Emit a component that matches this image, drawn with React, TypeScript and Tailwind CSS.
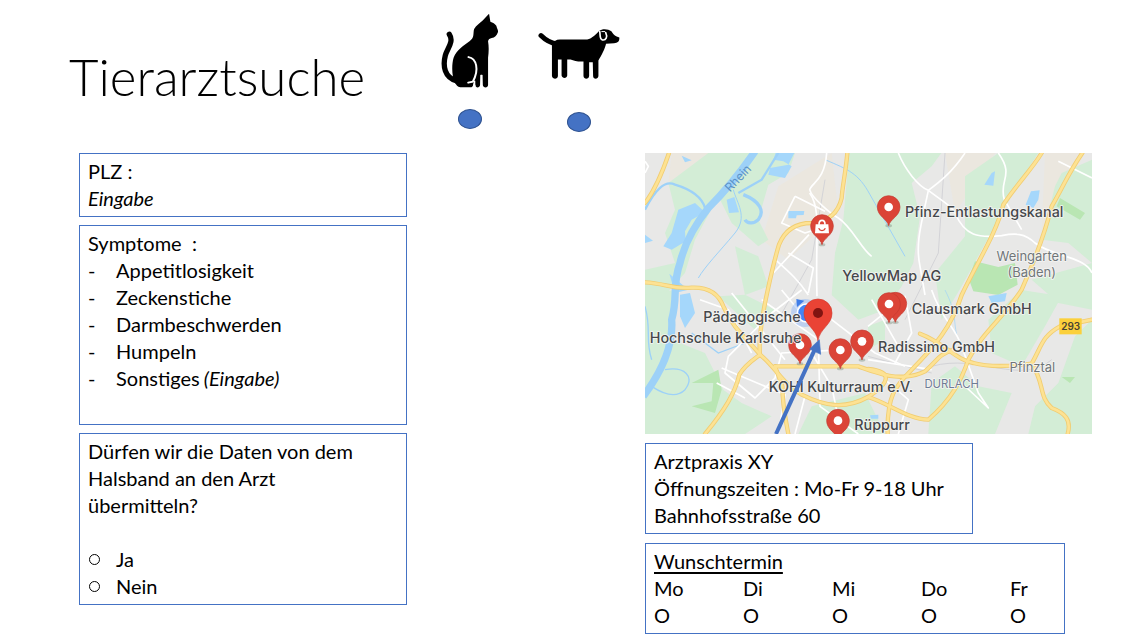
import React from "react";

const symptoms = ["Appetitlosigkeit", "Zeckenstiche", "Darmbeschwerden", "Humpeln"];
const days = ["Mo", "Di", "Mi", "Do", "Fr"];

const card = "min-w-0 border border-[#4472c4] px-2 py-1";
const dot =
  "h-5 w-6 appearance-none rounded-[50%] border border-[#2f528f] bg-[#4472c4] focus-visible:outline-2 focus-visible:outline-offset-2";

function Cat() {
  return (
    <svg viewBox="30 25 175 226" className="h-[75px] w-[58px]" aria-hidden="true">
      <path
        d="M175 27 L179 51 C186 54 193 57 197 63 C198 70 203 75 202 82 C198 93 192 99 183 100 C177 101 173 104 172 110 C175 128 174 144 172 160 L172 242 C172 252 157 252 156 242 L155 212 L149 212 L148 242 C147 252 133 252 134 242 L127 236 C128 244 125 249 118 249 L88 249 C80 248 76 241 72 236 C62 215 62 180 68 160 C77 136 98 123 117 109 C132 98 126 86 130 73 C136 61 147 56 155 48 Z"
        fill="#000"
      />
      <path d="M78 230 C40 220 35 184 43 153 C49 131 70 112 55 89" fill="none" stroke="#000" strokeWidth="16" strokeLinecap="round" />
      <path d="M113 158 C137 162 146 196 126 232 L112 235" fill="none" stroke="#fff" strokeWidth="6" strokeLinecap="round" />
      <path d="M131 229 V252 M152 211 V252" stroke="#fff" strokeWidth="5" />
    </svg>
  );
}

function Dog() {
  return (
    <svg viewBox="322 70 247 155" className="h-[52px] w-[82px]" aria-hidden="true">
      <path d="M331 92 C343 104 356 114 378 117" fill="none" stroke="#000" strokeWidth="15" strokeLinecap="round" />
      <path
        d="M364 122 C368 110 376 104 388 104 L470 104 C486 100 497 87 506 78 C516 70 534 72 543 79 C547 85 551 92 559 95 L567 98 C568 109 562 115 551 115 L527 117 C524 131 514 151 504 167 L504 214 C503 225 488 225 488 214 L487 172 L476 172 L476 214 C475 225 460 225 459 214 L459 170 C442 171 431 168 420 164 L410 164 L410 212 C409 222 395 222 393 212 L393 164 L382 164 L382 214 C381 225 366 225 364 214 Z"
        fill="#000"
      />
      <path d="M508 80 C510 91 507 103 516 105 C527 107 532 96 526 83" fill="none" stroke="#fff" strokeWidth="5" strokeLinecap="round" />
      <path d="M513 80 L524 80" stroke="#fff" strokeWidth="3" />
    </svg>
  );
}

function Pin({ x, y, children }: { x: number; y: number; children?: React.ReactNode }) {
  return (
    <g transform={`translate(${x} ${y})`}>
      <ellipse cx="0" cy="52" rx="10" ry="5" fill="#8a9a8c" opacity="0.5" />
      <path d="M0 52 C-4 32 -34 24 -34 -4 A34 34 0 0 1 34 -4 C34 24 4 32 0 52Z" fill="#db4437" stroke="#c33a30" strokeWidth="2" />
      {children ?? <circle cy="-4" r="13" fill="#fff" />}
    </g>
  );
}

const yellowRoads = [
  "M72 0 C55 50 35 105 0 150",
  "M607 0 C602 60 592 100 590 135 C580 180 550 205 500 210 C450 210 418 235 402 275 C385 330 375 380 362 440 C350 500 340 560 345 605",
  "M0 388 C60 390 80 410 140 404 C190 402 220 420 235 460 C265 530 310 560 345 605 C390 640 410 690 470 725 C540 760 600 770 669 732 C735 690 745 655 669 648",
  "M180 843 C240 770 270 720 283 665 C300 635 325 620 345 605",
  "M390 640 H640 C655 645 665 650 700 660 C760 680 810 670 840 655 C880 620 880 605 925 590",
  "M430 843 C420 790 412 755 412 700 L390 640",
  "M1190 0 C1160 50 1110 100 1075 155 C1055 240 990 340 950 426 C920 520 870 580 800 650 C750 700 725 730 728 843",
  "M1312 0 C1270 60 1250 110 1220 160 C1200 240 1170 320 1130 410 C1080 490 1010 540 970 620 C950 680 920 740 850 800 C790 800 730 750 669 732",
  "M825 542 C900 570 930 620 985 630 C1040 645 1100 640 1160 632 C1190 580 1190 550 1245 520 L1341 500",
  "M1160 632 C1200 690 1180 730 1220 765 C1260 780 1280 800 1268 843",
];

const whiteRoads = [
  "M545 0 C540 80 500 90 494 110 C500 135 560 185 580 195 C620 220 650 290 680 310",
  "M494 120 C530 170 510 250 516 430",
  "M450 130 L410 210 L480 240 L510 230 M450 130 L540 175",
  "M385 315 C430 355 460 380 490 426 M492 245 L385 360 M430 300 L505 345 L490 420",
  "M0 60 L10 40 L0 25",
  "M960 0 C920 60 880 90 850 112 C820 100 780 50 760 0",
  "M850 112 C900 150 920 160 930 180 C960 250 1000 255 1070 248 C1110 240 1140 240 1170 270 C1220 310 1320 310 1341 360",
  "M850 112 C830 210 810 270 825 340 L840 426",
  "M1060 0 C1110 70 1060 80 1078 140 L1130 230",
  "M1240 25 L1341 75",
  "M470 411 L380 480 L250 610 L240 660 L330 735 L390 675 L410 600 L600 590",
  "M260 420 L420 620 M350 440 L520 560 L525 760 L640 843 M560 500 L690 600 L780 640",
  "M410 411 L500 520",
  "M165 440 L250 470 L320 600 M215 690 L300 735",
  "M669 520 L780 430 L800 540 L750 630 M669 620 L860 650 M680 440 L760 580",
  "M860 411 C890 500 930 520 950 580 L1000 720 L1030 765 L950 690",
  "M760 843 L790 740 L720 680 M500 600 L560 700 L590 843",
  "M230 645 L420 725 L400 843 M480 730 L450 843",
];

const greens = [
  "M70 90 L190 0 L450 0 L430 60 L370 95 L340 200 L370 260 L340 280 L260 210 L220 130 L150 260 L120 360 L60 426 L0 426 V350 L90 330 L60 240 L90 170 Z",
  "M612 0 H889 L860 40 L800 90 L825 190 L805 330 L770 400 L720 470 L640 500 L560 426 L570 300 L595 200 Z",
  "M960 70 L1060 0 H1180 L1110 110 L1060 200 L950 400 L890 500 L870 360 L960 250 Z",
  "M1250 60 L1341 20 V330 L1270 270 L1190 260 L1230 100 Z",
  "M1130 411 L1250 430 L1200 520 L1130 640 L1040 600 L1030 500 Z",
  "M1160 380 L1341 330 V470 L1240 450 Z",
  "M1290 550 L1341 500 V843 H1150 L1170 760 L1240 690 Z",
  "M0 426 L90 410 L80 560 L180 600 L250 740 L180 843 H0 Z",
  "M220 700 L290 750 L380 790 L300 843 H190 Z",
  "M500 760 L660 720 L720 843 H460 Z",
  "M860 690 L930 640 L1000 700 L1100 720 L1050 843 H850 Z",
  "M220 430 L300 425 L390 470 L330 530 Z",
  "M270 280 L340 310 L370 400 L300 426 Z",
  "M669 520 L720 500 L720 560 L669 590 Z",
];

function MapView() {
  return (
    <svg viewBox="0 0 1341 843" className="block h-auto w-full" role="img" aria-label="Karte Karlsruhe">
      <rect width="1341" height="843" fill="#e8e8e7" />
      <path d="M80 0 H200 L70 90 Z M400 100 L560 0 L580 180 L430 320 L350 260 Z M900 0 H1050 L930 180 Z M1200 0 H1320 L1190 240 Z" fill="#ebe7df" />
      <g fill="#d3edd6">
        {greens.map((d) => (
          <path key={d} d={d} />
        ))}
      </g>
      <path
        d="M990 325 L1060 342 L1110 330 L1118 395 L1060 426 L985 415 L970 375 Z M1245 135 L1320 180 L1305 200 L1235 160 Z M1250 672 L1290 672 L1275 690 Z M140 690 L220 650 L230 710 L210 780 L140 760 L200 745 L205 690 Z"
        fill="#b9e6b3"
      />
      <g fill="#a5d7fb">
        <path d="M100 170 L150 150 L180 178 L140 200 L120 235 L122 265 L80 290 L55 280 L80 240 Z" />
        <path d="M245 140 L268 132 L282 178 L252 180 Z M375 45 L430 35 L448 0 H392 L385 20 L415 25 L440 40 L420 75 L370 65 Z" />
        <path d="M430 174 L478 174 L476 186 L455 187 L453 196 L430 196 Z M110 8 L140 22 L120 28 Z M0 245 L24 263 L0 270 Z M73 362 L130 410 L90 420 Z" />
        <path d="M1040 60 L1050 55 L1045 98 L1018 95 Z M1158 115 L1184 112 L1180 140 L1165 165 L1142 155 Z M1030 430 L1085 420 L1080 445 L1040 450 Z M675 787 L700 785 V797 H678 Z" />
        <path d="M105 425 L135 420 L150 480 L120 525 L105 490 Z" />
      </g>
      <g fill="none" stroke="#9dd1f8">
        <path d="M330 -5 C275 75 235 120 190 165 C150 215 120 265 105 330 C80 400 100 430 80 500 C85 570 55 650 -5 730" strokeWidth="22" />
        <path d="M295 125 C345 145 360 175 340 200 C325 215 305 210 300 200" strokeWidth="10" />
        <path d="M0 170 C30 110 60 80 90 95 C140 110 170 130 180 165 M280 120 L350 80 L400 0" strokeWidth="7" />
        <path d="M265 110 C275 150 310 190 270 240 C220 300 180 340 160 375 M540 20 C610 50 640 60 675 125 L780 310" strokeWidth="3" />
        <path d="M0 460 C20 530 0 560 20 620 M60 650 C120 640 150 670 120 710 C90 740 50 720 20 700 M140 540 L220 600 L300 570" strokeWidth="4" />
        <path d="M900 411 C935 480 925 500 935 545" strokeWidth="2" />
      </g>
      <path d="M540 80 L500 320 L400 500 M900 0 L880 300 L780 500 M860 640 C1000 600 1130 700 1220 620 M669 610 L860 660" fill="none" stroke="#d3d3d7" strokeWidth="3" />
      <g fill="none" stroke="#fff" strokeWidth="5" strokeLinejoin="round">
        {whiteRoads.map((d) => (
          <path key={d} d={d} />
        ))}
      </g>
      <g fill="none" stroke="#f1cd72" strokeWidth="13" strokeLinecap="round">
        {yellowRoads.map((d) => (
          <path key={d} d={d} />
        ))}
      </g>
      <g fill="none" stroke="#fde293" strokeWidth="8" strokeLinecap="round">
        {yellowRoads.map((d) => (
          <path key={d} d={d} />
        ))}
      </g>

      <rect x="1243" y="496" width="67" height="48" fill="#fbd03b" />
      <g className="font-['Inter',sans-serif]" textAnchor="middle">
        <text x="1277" y="532" fontSize="30" fontWeight="600" fill="#4a4433">293</text>
        <text transform="translate(288 84) rotate(-46)" fontSize="36" fill="#5a92c8">Rhein</text>
      </g>

      <circle cx="480" cy="480" r="42" fill="#8ab4f8" opacity="0.45" />
      <path d="M454 438 L478 443 L456 462 Z" fill="#3f7de8" />
      <circle cx="484" cy="480" r="27" fill="#4285f4" stroke="#fff" strokeWidth="5" />

      <Pin x={531} y={223}>
        <path d="M-19 -9 H19 L21 18 H-21 Z" fill="#fff" />
        <path d="M-9 -8 C-9 -25 9 -25 9 -8" fill="none" stroke="#fff" strokeWidth="5" />
        <path d="M-10 3 C-6 12 6 12 10 3" fill="none" stroke="#db4437" strokeWidth="4" />
      </Pin>
      <Pin x={731} y={166} />
      <Pin x={751} y={456} />
      <Pin x={732} y={457} />
      <Pin x={651} y={569} />
      <Pin x={586} y={595} />
      <Pin x={465} y={580} />
      <Pin x={579} y={807} />

      <g
        className="font-['Inter',sans-serif]"
        fontSize="43"
        fontWeight="500"
        fill="#45484b"
        stroke="#f5f5f3"
        strokeWidth="5"
        strokeLinejoin="round"
        paintOrder="stroke"
      >
        <text x="780" y="193">Pfinz-Entlastungskanal</text>
        <text x="592" y="384">YellowMap AG</text>
        <text x="800" y="483">Clausmark GmbH</text>
        <text x="699" y="597">Radissimo GmbH</text>
        <text x="467" y="508" textAnchor="end">Pädagogische</text>
        <text x="469" y="569" textAnchor="end">Hochschule Karlsruhe</text>
        <text x="371" y="718">KOHI Kulturraum e.V.</text>
        <text x="628" y="832">Rüppurr</text>
        <g fill="#707579" fontSize="39" fontWeight="400">
          <text x="1160" y="323" textAnchor="middle">Weingarten</text>
          <text x="1160" y="372" textAnchor="middle">(Baden)</text>
          <text x="1162" y="658" textAnchor="middle">Pfinztal</text>
          <text x="920" y="705" textAnchor="middle" fontSize="34" fill="#6f7c95">DURLACH</text>
        </g>
      </g>

      <path d="M519 564 C514 525 477 517 477 480 A42 42 0 0 1 561 480 C561 517 524 525 519 564Z" fill="#ea4335" stroke="#d23b2f" strokeWidth="2" />
      <circle cx="519" cy="480" r="15" fill="#811411" />
      <path d="M393 843 L508 592" stroke="#4472c4" strokeWidth="12" />
      <path d="M523 560 L527 604 L494 588 Z" fill="#4472c4" stroke="#4472c4" strokeWidth="2" />
    </svg>
  );
}

export default function App() {
  return (
    <main className="min-h-screen bg-white font-['Lato',sans-serif] text-[20px] leading-[27px] text-black">
      <header className="flex h-[153px] items-start pl-[69px]">
        <h1 className="w-[366px] pt-[46px] text-[51px] leading-[62px] font-light">Tierarztsuche</h1>
        <div className="flex">
          <label className="flex w-[70px] flex-col items-center gap-[21px] pt-[13px]">
            <Cat />
            <input type="radio" name="animal" aria-label="Katze" className={dot} />
          </label>
          <label className="ml-6 flex w-[100px] flex-col items-center gap-8 pt-7">
            <Dog />
            <input type="radio" name="animal" aria-label="Hund" className={dot} />
          </label>
        </div>
      </header>

      <div className="grid grid-cols-[minmax(0,328fr)_minmax(0,447fr)] gap-x-[238px] pr-[34px] pb-2 pl-[79px]">
        <form className="flex flex-col gap-2">
          <div className={card}>
            <label htmlFor="plz" className="block">PLZ :</label>
            <input
              id="plz"
              placeholder="Eingabe"
              className="block h-[27px] w-full italic outline-none placeholder:text-black"
            />
          </div>

          <section className={`${card} min-h-50`}>
            <h2 className="whitespace-pre">Symptome  :</h2>
            <ul>
              {symptoms.map((s) => (
                <li key={s} className="flex">
                  <span className="w-7">-</span>
                  {s}
                </li>
              ))}
              <li className="flex">
                <span className="w-7">-</span>
                <label htmlFor="other" className="mr-1">Sonstiges</label>
                <input
                  id="other"
                  placeholder="(Eingabe)"
                  className="h-[27px] min-w-0 flex-1 italic outline-none placeholder:text-black"
                />
              </li>
            </ul>
          </section>

          <fieldset className={card}>
            <legend className="float-left mb-[27px] w-full pr-8">
              Dürfen wir die Daten von dem Halsband an den Arzt übermitteln?
            </legend>
            {["Ja", "Nein"].map((a) => (
              <label key={a} className="clear-both flex items-center">
                <input
                  type="radio"
                  name="consent"
                  className="mr-4 ml-px size-[11px] appearance-none rounded-full border border-black checked:bg-black"
                />
                {a}
              </label>
            ))}
          </fieldset>
        </form>

        <div className="flex flex-col items-start gap-[9px]">
          <div className="w-full">
            <MapView />
          </div>
          <section className={`${card} w-[328px]`}>
            <p>Arztpraxis XY</p>
            <p>Öffnungszeiten : Mo-Fr 9-18 Uhr</p>
            <p>Bahnhofsstraße 60</p>
          </section>
          <fieldset className={`${card} w-[420px]`}>
            <legend className="float-left w-full underline underline-offset-3">Wunschtermin</legend>
            <div className="clear-both flex">
              {days.map((d) => (
                <label key={d} className="relative flex w-[89px] shrink-0 flex-col last:w-auto">
                  <span>{d}</span>
                  <input type="radio" name="day" className="peer sr-only" />
                  <span className="peer-checked:font-bold">O</span>
                </label>
              ))}
            </div>
          </fieldset>
        </div>
      </div>
    </main>
  );
}
